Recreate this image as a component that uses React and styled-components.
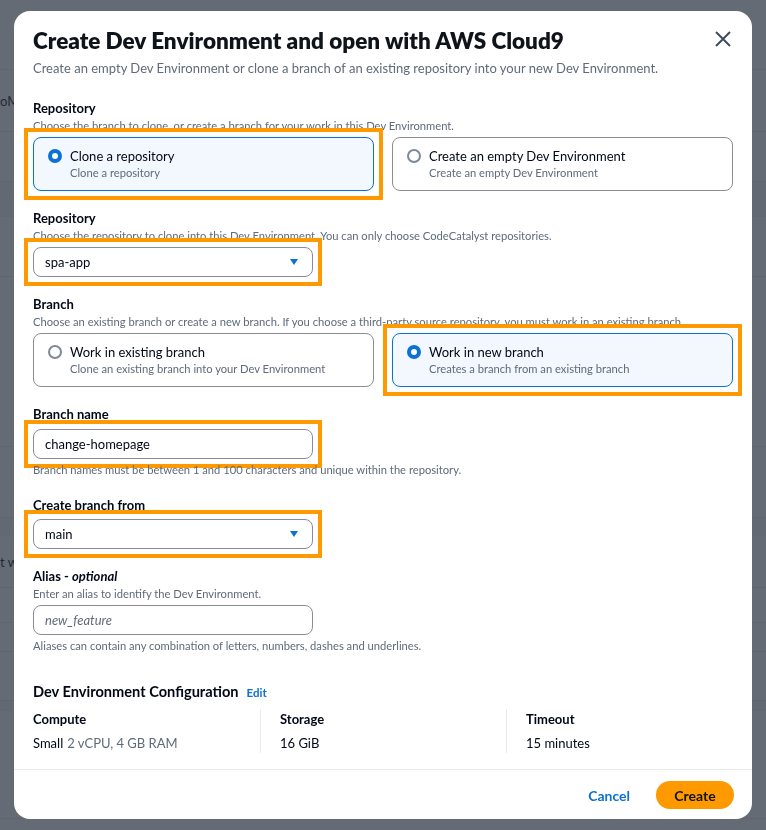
import React from "react";
import styled, { createGlobalStyle } from "styled-components";

const FONT = `"Lato", "Open Sans", sans-serif`;

const GlobalStyle = createGlobalStyle`
  * { box-sizing: border-box; }
  html, body { margin: 0; padding: 0; }
  body {
    font-family: ${FONT};
    color: #000716;
    background: #ffffff;
    -webkit-font-smoothing: antialiased;
  }
`;

/* page behind the dialog */
const Page = styled.div`
  width: 766px;
  height: 830px;
  overflow: hidden;
  background: #ffffff;
`;

const BgRow = styled.div`
  height: ${props => props.h}px;
  border-bottom: 1px solid ${props => (props.band ? "#f4f4f4" : "#e9ebed")};
  background: ${props => (props.band ? "#f8f8f8" : "transparent")};
  display: flex;
  align-items: center;
  font-size: 13px;
  color: #16191f;
  white-space: nowrap;
`;

const Overlay = styled.div`
  position: fixed;
  inset: 0;
  background: rgba(36, 44, 58, 0.7);
`;

/* dialog */
const Modal = styled.div`
  position: fixed;
  top: 11px;
  left: 14px;
  width: 738px;
  height: 808px;
  background: #ffffff;
  border-radius: 16px;
  display: flex;
  flex-direction: column;
  overflow: hidden;
`;

const Header = styled.div`
  padding: 16px 19px 0 19px;
`;

const TitleRow = styled.div`
  display: flex;
  justify-content: space-between;
  align-items: flex-start;
`;

const Title = styled.h1`
  margin: 0;
  font-size: 22.5px;
  line-height: 28px;
  font-weight: 800;
  color: #0f141a;
`;

const CloseButton = styled.button`
  border: 0;
  background: none;
  padding: 0;
  margin: 3px 1px 0 0;
  width: 18px;
  height: 18px;
  color: #414d5c;
  cursor: pointer;
`;

const Subtitle = styled.p`
  margin: 3px 0 0 0;
  font-size: 13px;
  line-height: 20px;
  color: #5f6b7a;
`;

const Body = styled.div`
  flex: 1;
  padding: 20px 19px 16px 19px;
  display: flex;
  flex-direction: column;
  gap: 17px;
`;

const Field = styled.div`
  display: flex;
  flex-direction: column;
`;

const Label = styled.div`
  font-size: 13px;
  line-height: 20px;
  font-weight: 700;
  color: #000716;

  em {
    font-weight: 700;
    font-style: italic;
  }
`;

const Desc = styled.div`
  font-size: 11.2px;
  line-height: 16px;
  color: #5f6b7a;
`;

const Help = styled(Desc)`
  margin-top: 3px;
`;

const Control = styled.div`
  margin-top: ${props => props.top || 3}px;
`;

const TileGrid = styled.div`
  display: grid;
  grid-template-columns: 1fr 1fr;
  gap: 18px;
`;

const Highlight = styled.div`
  outline: 4px solid #ff9900;
  outline-offset: 5px;
  width: ${props => props.w || "auto"};
`;

const Tile = styled.div`
  display: flex;
  align-items: flex-start;
  gap: 8px;
  height: 54px;
  padding: 9px 14px;
  border-radius: 8px;
  border: 1px solid ${props => (props.selected ? "#0972d3" : "#8c8c94")};
  background: ${props => (props.selected ? "#f2f8fd" : "#ffffff")};
`;

const Radio = styled.span`
  flex: none;
  width: 14px;
  height: 14px;
  margin-top: 2px;
  border-radius: 50%;
  border: ${props => (props.checked ? "4.5px solid #0972d3" : "2px solid #7d8998")};
  background: #ffffff;
`;

const TileText = styled.div`
  display: flex;
  flex-direction: column;
`;

const TileTitle = styled.span`
  font-size: 13px;
  line-height: 18px;
  color: #000716;
`;

const TileDesc = styled.span`
  font-size: 11.2px;
  line-height: 16px;
  color: #5f6b7a;
`;

const Box = styled.div`
  width: 280px;
  height: 30px;
  border: 1px solid #8c8c94;
  border-radius: 8px;
  padding: 0 13px 0 11px;
  display: flex;
  align-items: center;
  justify-content: space-between;
  font-size: 13px;
  color: #000716;
`;

const Placeholder = styled.span`
  font-style: italic;
  color: #5f6b7a;
`;

const Caret = styled.svg`
  width: 10px;
  height: 8px;
  fill: #0972d3;
`;

const ConfigSection = styled.div`
  margin-top: 10px;
  display: flex;
  flex-direction: column;
  gap: 5px;
`;

const ConfigHeader = styled.div`
  display: flex;
  align-items: baseline;
  gap: 8px;
  font-size: 14.6px;
  line-height: 22px;
  font-weight: 700;
`;

const EditLink = styled.a`
  font-size: 11.5px;
  font-weight: 700;
  color: #0972d3;
  text-decoration: none;
`;

const Columns = styled.div`
  display: grid;
  grid-template-columns: 227px 246px 1fr;
`;

const Column = styled.div`
  display: flex;
  flex-direction: column;
  gap: 4px;
  padding-left: ${props => (props.first ? 0 : 19)}px;
  border-left: ${props => (props.first ? "none" : "1px solid #e9ebed")};
`;

const ColLabel = styled.div`
  font-size: 13px;
  line-height: 20px;
  font-weight: 700;
`;

const ColValue = styled.div`
  font-size: 13px;
  line-height: 20px;
  color: #000716;

  span {
    color: #5f6b7a;
    margin-left: 4px;
  }
`;

const Footer = styled.div`
  border-top: 1px solid #e9ebed;
  padding: 11px 18px 10px 19px;
  display: flex;
  justify-content: flex-end;
  align-items: center;
  gap: 26px;
`;

const LinkButton = styled.button`
  border: 0;
  background: none;
  padding: 0;
  font-family: ${FONT};
  font-size: 14px;
  font-weight: 700;
  color: #0972d3;
`;

const PrimaryButton = styled.button`
  border: 0;
  height: 28px;
  width: 78px;
  border-radius: 20px;
  background: #ff9900;
  font-family: ${FONT};
  font-size: 14px;
  font-weight: 700;
  color: #0f141a;
`;

const CaretDown = () => (
  <Caret viewBox="0 0 10 8">
    <path d="M1 1h8L5 7z" />
  </Caret>
);

const SelectBox = ({ value }) => (
  <Box>
    <span>{value}</span>
    <CaretDown />
  </Box>
);

const OptionTile = ({ selected, title, desc }) => (
  <Tile selected={selected}>
    <Radio checked={selected} />
    <TileText>
      <TileTitle>{title}</TileTitle>
      <TileDesc>{desc}</TileDesc>
    </TileText>
  </Tile>
);

const bgRows = [
  { h: 70, text: "" },
  { h: 62, text: "oMain" },
  { h: 50 },
  { h: 18, band: true },
  { h: 17, band: true },
  { h: 60 },
  { h: 170 },
  { h: 71 },
  { h: 18, band: true },
  { h: 52, text: "t with" },
  { h: 35 },
  { h: 29 },
  { h: 49 },
  { h: 10, band: true },
  { h: 108 }
];

export default function App() {
  return (
    <>
      <GlobalStyle />
      <Page>
        {bgRows.map((row, i) => (
          <BgRow key={i} h={row.h} band={row.band}>
            {row.text}
          </BgRow>
        ))}
      </Page>
      <Overlay />
      <Modal>
        <Header>
          <TitleRow>
            <Title>Create Dev Environment and open with AWS Cloud9</Title>
            <CloseButton aria-label="Close">
              <svg viewBox="0 0 18 18" width="18" height="18">
                <path
                  d="M2 2l14 14M16 2L2 16"
                  stroke="currentColor"
                  strokeWidth="2"
                  fill="none"
                />
              </svg>
            </CloseButton>
          </TitleRow>
          <Subtitle>
            Create an empty Dev Environment or clone a branch of an existing
            repository into your new Dev Environment.
          </Subtitle>
        </Header>

        <Body>
          <Field>
            <Label>Repository</Label>
            <Desc>
              Choose the branch to clone, or create a branch for your work in
              this Dev Environment.
            </Desc>
            <Control>
              <TileGrid>
                <Highlight>
                  <OptionTile
                    selected
                    title="Clone a repository"
                    desc="Clone a repository"
                  />
                </Highlight>
                <OptionTile
                  title="Create an empty Dev Environment"
                  desc="Create an empty Dev Environment"
                />
              </TileGrid>
            </Control>
          </Field>

          <Field>
            <Label>Repository</Label>
            <Desc>
              Choose the repository to clone into this Dev Environment. You can
              only choose CodeCatalyst repositories.
            </Desc>
            <Control>
              <Highlight w="280px">
                <SelectBox value="spa-app" />
              </Highlight>
            </Control>
          </Field>

          <Field>
            <Label>Branch</Label>
            <Desc>
              Choose an existing branch or create a new branch. If you choose a
              third-party source repository, you must work in an existing
              branch.
            </Desc>
            <Control>
              <TileGrid>
                <OptionTile
                  title="Work in existing branch"
                  desc="Clone an existing branch into your Dev Environment"
                />
                <Highlight>
                  <OptionTile
                    selected
                    title="Work in new branch"
                    desc="Creates a branch from an existing branch"
                  />
                </Highlight>
              </TileGrid>
            </Control>
          </Field>

          <Field>
            <Label>Branch name</Label>
            <Control top={5}>
              <Highlight w="280px">
                <Box>change-homepage</Box>
              </Highlight>
            </Control>
            <Help>
              Branch names must be between 1 and 100 characters and unique
              within the repository.
            </Help>
          </Field>

          <Field>
            <Label>Create branch from</Label>
            <Control top={4}>
              <Highlight w="280px">
                <SelectBox value="main" />
              </Highlight>
            </Control>
          </Field>

          <Field>
            <Label>
              Alias - <em>optional</em>
            </Label>
            <Desc>Enter an alias to identify the Dev Environment.</Desc>
            <Control>
              <Box>
                <Placeholder>new_feature</Placeholder>
              </Box>
            </Control>
            <Help>
              Aliases can contain any combination of letters, numbers, dashes
              and underlines.
            </Help>
          </Field>

          <ConfigSection>
            <ConfigHeader>
              Dev Environment Configuration
              <EditLink href="#">Edit</EditLink>
            </ConfigHeader>
            <Columns>
              <Column first>
                <ColLabel>Compute</ColLabel>
                <ColValue>
                  Small<span>2 vCPU, 4 GB RAM</span>
                </ColValue>
              </Column>
              <Column>
                <ColLabel>Storage</ColLabel>
                <ColValue>16 GiB</ColValue>
              </Column>
              <Column>
                <ColLabel>Timeout</ColLabel>
                <ColValue>15 minutes</ColValue>
              </Column>
            </Columns>
          </ConfigSection>
        </Body>

        <Footer>
          <LinkButton>Cancel</LinkButton>
          <PrimaryButton>Create</PrimaryButton>
        </Footer>
      </Modal>
    </>
  );
}
